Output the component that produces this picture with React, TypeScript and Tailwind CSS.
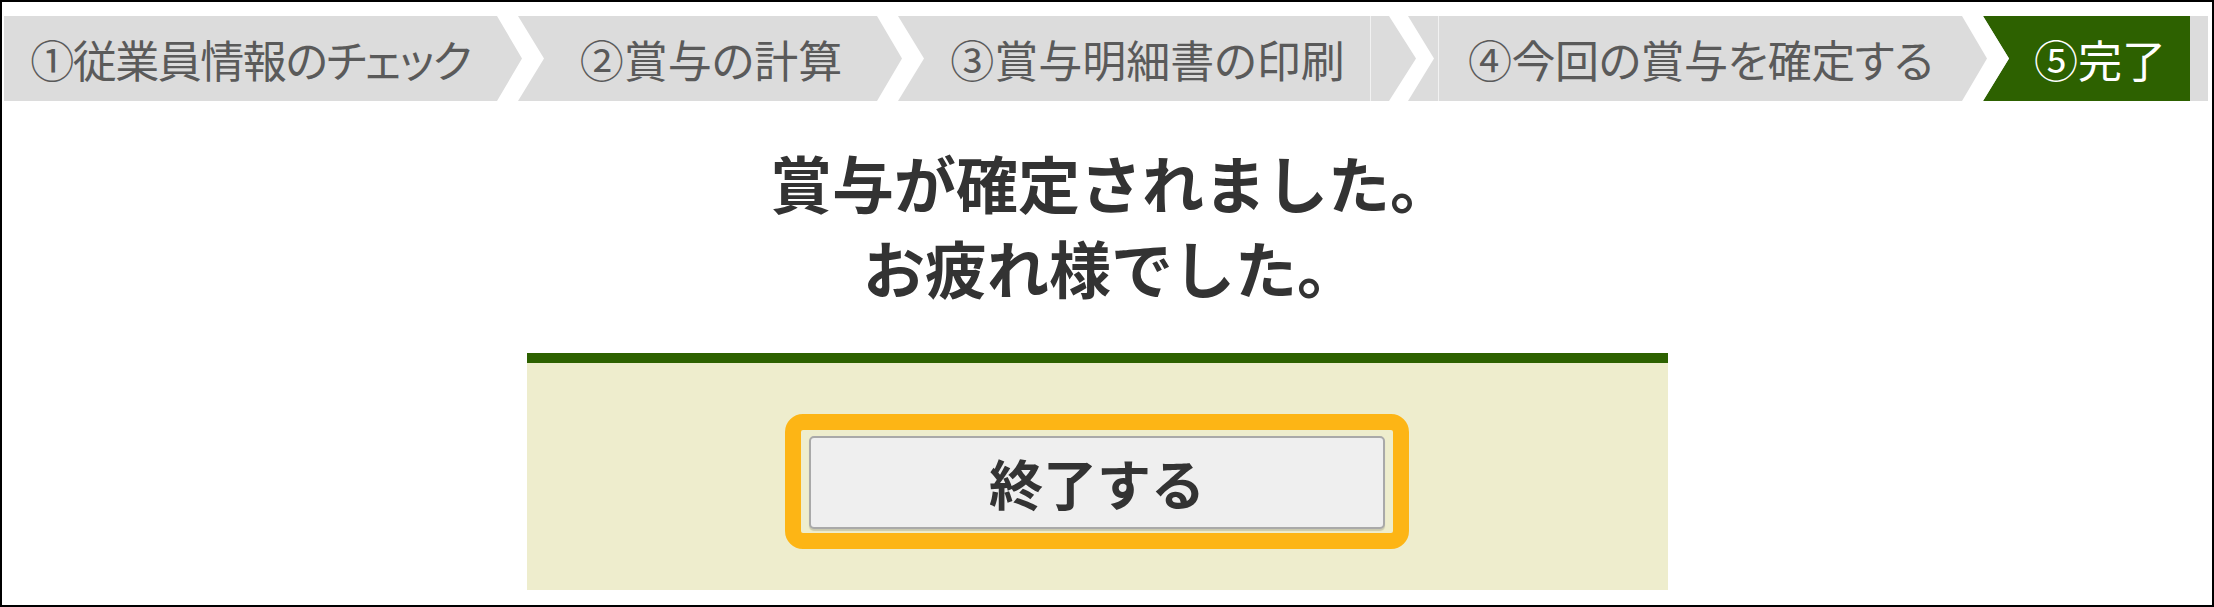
import React from "react";

const jp = "font-['Noto_Sans_CJK_JP','Noto_Sans',sans-serif]";

const Chevron = ({ green = false }: { green?: boolean }) => (
  <svg width="48" height="85" viewBox="0 0 48 85" className="shrink-0 block">
    <polygon points="21,0 48,0 48,85 21,85 47,42.5" fill={green ? "#2d6100" : "#dcdcdc"} />
    <polygon points="0,0 21,0 47,42.5 21,85 0,85 25,42.5" fill="#ffffff" />
  </svg>
);

const Step = ({ label, className }: { label: string; className: string }) => (
  <div
    className={`flex items-center justify-center shrink-0 h-full text-[44px] text-[#5a5a5a] [font-feature-settings:'palt'] whitespace-nowrap ${className}`}
  >
    {label}
  </div>
);

const App = () => {
  return (
    <div className={`w-[2214px] h-[607px] bg-white border-2 border-black ${jp}`}>
      {/* step bar */}
      <div className="flex h-[85px] mt-[14px] ml-[2px] mr-[4px] bg-[#dcdcdc]">
        <Step label="①従業員情報のチェック" className="w-[493px] tracking-[-1.5px]" />
        <Chevron />
        <Step label="②賞与の計算" className="w-[332px]" />
        <Chevron />
        <Step label="③賞与明細書の印刷" className="w-[446px] border-r border-[#f2f2f2]" />
        <svg width="67" height="85" viewBox="0 0 67 85" className="shrink-0 block">
          <polygon points="18,0 37,0 63,42.5 37,85 18,85 45,42.5" fill="#ffffff" />
        </svg>
        <Step label="④今回の賞与を確定する" className="w-[524px] border-l border-[#f2f2f2] tracking-[-0.5px]" />
        <Chevron green />
        <div className="flex items-center justify-center w-[180px] h-full bg-[#2d6100] text-white text-[44px] [font-feature-settings:'palt'] whitespace-nowrap">
          ⑤完了
        </div>
      </div>

      {/* message */}
      <div className="flex flex-col items-center pl-[8px] mt-[39px]">
        <p className="text-[62px] leading-[85px] font-bold text-[#333333] text-center">
          賞与が確定されました。
          <br />
          お疲れ様でした。
        </p>
      </div>

      <div className="flex justify-center pr-[20px] mt-[43px]">
        <div className="w-[1141px] border-t-[10px] border-[#2d6100] bg-[#eeedcd] pt-[51px] pb-[41px] flex justify-center">
          <div className="w-[624px] h-[135px] border-[16px] border-[#fdb515] rounded-[18px] pt-[6px] pb-[4px] px-[8px] flex">
            <button className="flex-1 flex items-center justify-center bg-[#efefef] border-2 border-[#a9a9a9] rounded-[5px] shadow-[0_2px_1px_rgba(0,0,0,0.15)] text-[54px] font-bold text-[#333333]">
              終了する
            </button>
          </div>
        </div>
      </div>
    </div>
  );
};

export default App;
